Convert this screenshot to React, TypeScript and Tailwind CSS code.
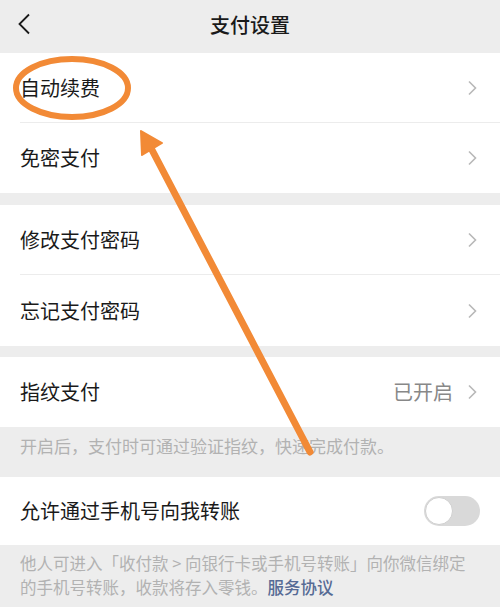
import React, { useState } from 'react'

const font = { fontFamily: '"Noto Sans CJK SC", "Noto Sans", sans-serif' }

const Chevron: React.FC = () => (
  <svg width="10" height="16" viewBox="0 0 10 16" className="shrink-0">
    <path d="M2 1.5 L8.5 8 L2 14.5" fill="none" stroke="#b8b8b8" strokeWidth="1.6" />
  </svg>
)

const Row: React.FC<{ label: string; value?: string; divider?: boolean; h?: string }> = ({
  label,
  value,
  divider,
  h = 'h-[70px]',
}) => (
  <div className={`relative flex items-center justify-between pl-5 pr-[23px] ${h}`}>
    <span className="text-[20px] text-[#1a1a1a]">{label}</span>
    <div className="flex items-center gap-[14px]">
      {value && <span className="text-[20px] text-[#888888]">{value}</span>}
      <Chevron />
    </div>
    {divider && <div className="absolute bottom-0 left-5 right-0 h-px bg-[#ececec]" />}
  </div>
)

export default function App() {
  const [allow, setAllow] = useState(false)

  return (
    <div className="relative w-[500px] h-[607px] overflow-hidden bg-[#ededed]" style={font}>
      {/* Header */}
      <div className="relative flex h-[53px] items-center justify-center pb-1">
        <svg width="14" height="22" viewBox="0 0 14 22" className="absolute left-[17px] top-[13px]">
          <path d="M12 1.5 L2.5 11 L12 20.5" fill="none" stroke="#1a1a1a" strokeWidth="1.8" />
        </svg>
        <h1 className="text-[20px] font-medium text-[#1a1a1a]">支付设置</h1>
      </div>

      <div className="bg-white">
        <Row label="自动续费" divider />
        <Row label="免密支付" />
      </div>

      <div className="mt-3 bg-white">
        <Row label="修改支付密码" divider />
        <Row label="忘记支付密码" h="h-[71px]" />
      </div>

      <div className="mt-[11px] bg-white">
        <Row label="指纹支付" value="已开启" />
      </div>
      <div className="h-[50px] px-5 pt-[7px] text-[17px] leading-[24px] text-[#b2b2b2]">
        开启后，支付时可通过验证指纹，快速完成付款。
      </div>

      <div className="flex h-[68px] items-center justify-between bg-white pl-5 pr-5">
        <span className="text-[20px] text-[#1a1a1a]">允许通过手机号向我转账</span>
        <button
          onClick={() => setAllow(!allow)}
          className={`relative h-[30px] w-[56px] rounded-full ${allow ? 'bg-[#07c160]' : 'bg-[#d9d9d9]'}`}
        >
          <span
            className={`absolute top-[1px] h-[28px] w-[28px] rounded-full border border-[#cfcfcf] bg-white ${
              allow ? 'left-[27px]' : 'left-[1px]'
            }`}
          />
        </button>
      </div>
      <div className="pl-5 pt-[6px] text-[16.5px] leading-[24px] text-[#b2b2b2]">
        <span className="whitespace-nowrap">他人可进入「收付款 &gt; 向银行卡或手机号转账」向你微信绑定</span>
        <br />
        的手机号转账，收款将存入零钱。
        <span className="font-medium text-[#576b95]">服务协议</span>
      </div>

      {/* Annotation overlay */}
      <svg className="pointer-events-none absolute inset-0" width="500" height="607" viewBox="0 0 500 607">
        <ellipse cx="72" cy="88" rx="56" ry="29" fill="none" stroke="#f28a36" strokeWidth="6" />
        <line x1="151" y1="148" x2="310" y2="452" stroke="#f28a36" strokeWidth="7" strokeLinecap="round" />
        <polygon points="141,131 162,143 142,155" fill="#f28a36" stroke="#f28a36" strokeWidth="2" strokeLinejoin="round" />
      </svg>
    </div>
  )
}
